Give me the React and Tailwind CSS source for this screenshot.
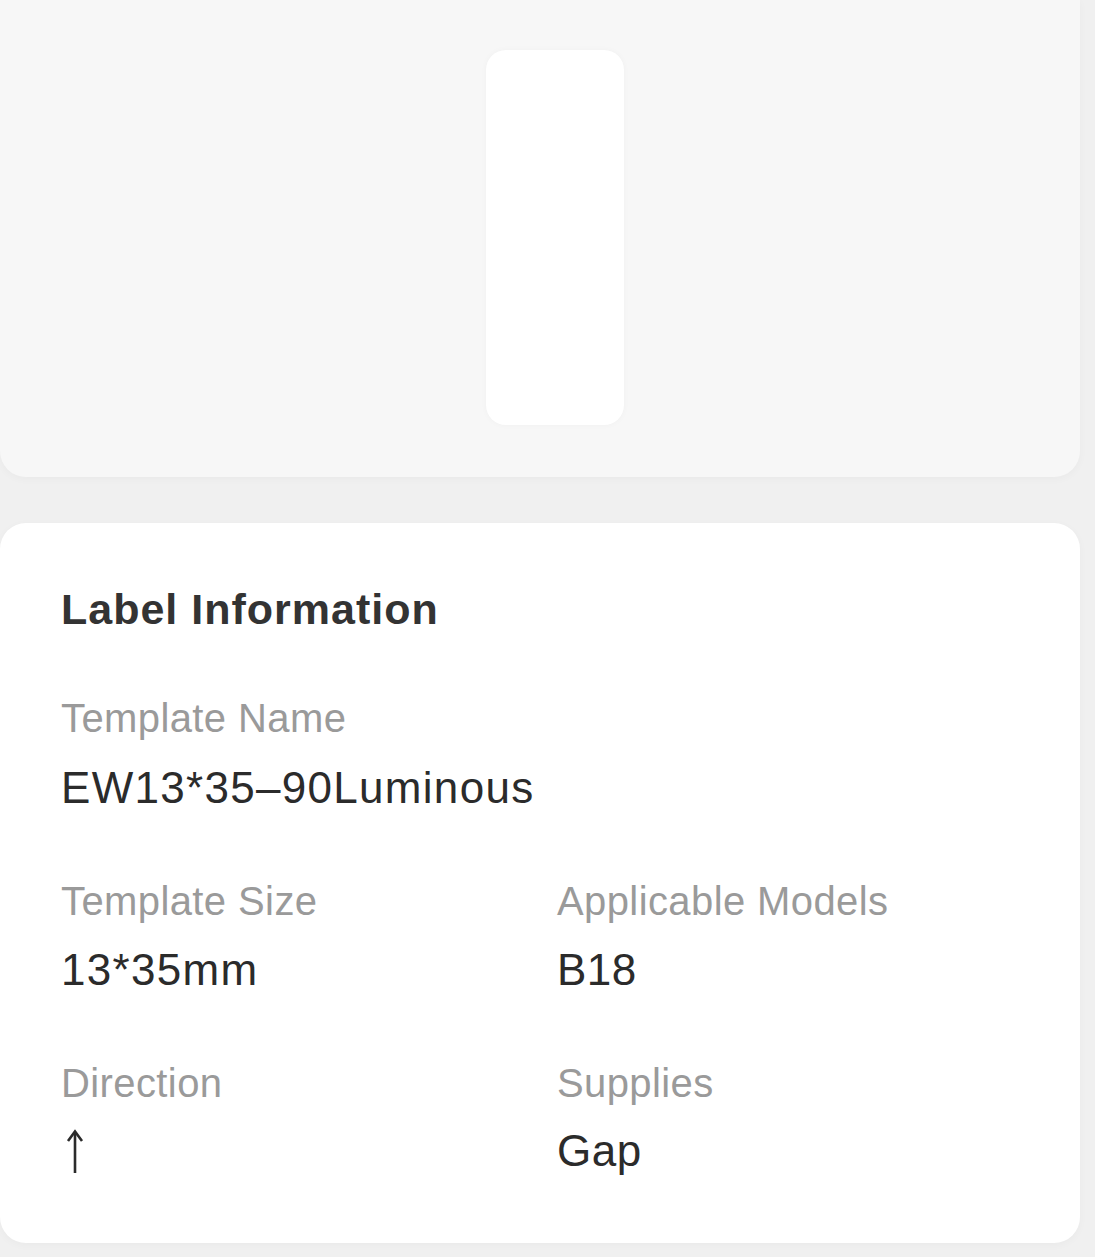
export default function App() {
  const font = { fontFamily: '"Liberation Sans", Arial, sans-serif' };
  return (
    <div className="w-[1095px] h-[1257px] bg-[#f0f0f0] overflow-hidden" style={font}>
      <div className="w-[1080px] flex flex-col gap-[46px]">
        <div className="h-[477px] bg-[#f7f7f7] rounded-b-[26px] shadow-[0_2px_8px_rgba(0,0,0,0.03)] pt-[50px] pl-[486px]">
          <div className="w-[138px] h-[375px] bg-white rounded-[20px] shadow-[0_0_6px_rgba(0,0,0,0.03)]" />
        </div>
        <div className="h-[720px] bg-white rounded-[26px] shadow-[0_2px_8px_rgba(0,0,0,0.03)] pt-[61px] pl-[61px]">
          <div className="text-[43px] leading-[50px] font-bold tracking-[1px] text-[#333333] mb-[59px]">Label Information</div>
          <div className="flex flex-col gap-[60px]">
            <div>
              <div className="text-[40px] leading-[50px] tracking-[0.4px] text-[#9a9a9a]">Template Name</div>
              <div className="text-[44px] leading-[56px] tracking-[1.3px] mt-[17px] text-[#2b2b2b]">EW13*35–90Luminous</div>
            </div>
            <div className="grid grid-cols-[496px_1fr]">
              <div>
                <div className="text-[40px] leading-[50px] tracking-[0.4px] text-[#9a9a9a]">Template Size</div>
                <div className="text-[44px] leading-[56px] tracking-[1.3px] mt-[16px] text-[#2b2b2b]">13*35mm</div>
              </div>
              <div>
                <div className="text-[40px] leading-[50px] tracking-[0.4px] text-[#9a9a9a]">Applicable Models</div>
                <div className="text-[44px] leading-[56px] tracking-[0.5px] mt-[16px] text-[#2b2b2b]">B18</div>
              </div>
            </div>
            <div className="grid grid-cols-[496px_1fr]">
              <div>
                <div className="text-[40px] leading-[50px] tracking-[0.4px] text-[#9a9a9a]">Direction</div>
                <div className="h-[56px] mt-[15px] flex items-center pl-[5px]">
                  <svg width="18" height="44" viewBox="0 0 18 44" fill="none" stroke="#2b2b2b" strokeWidth="2.6">
                    <path d="M9 3 V44" />
                    <path d="M2 12 L9 2.5 L16 12" strokeLinejoin="miter" />
                  </svg>
                </div>
              </div>
              <div>
                <div className="text-[40px] leading-[50px] tracking-[0.4px] text-[#9a9a9a]">Supplies</div>
                <div className="text-[44px] leading-[56px] tracking-[0.5px] mt-[15px] text-[#2b2b2b]">Gap</div>
              </div>
            </div>
          </div>
        </div>
      </div>
    </div>
  );
}
